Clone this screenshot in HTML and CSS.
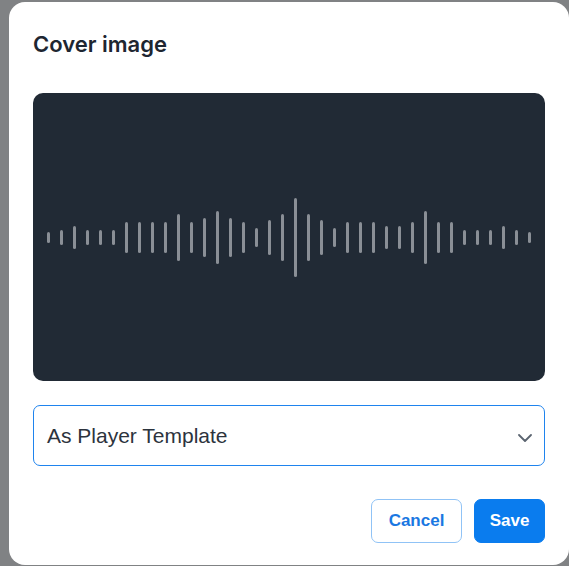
FILE: index.html
```html
<!DOCTYPE html>
<html>
<head>
<meta charset="utf-8">
<link rel="stylesheet" href="styles.css">
</head>
<body>
<div class="dialog">
  <h2 class="title">Cover image</h2>
  <div class="cover">
    <div class="wave">
      <span style="height:11px"></span><span style="height:15px"></span><span style="height:23px"></span><span style="height:15px"></span><span style="height:15px"></span><span style="height:15px"></span><span style="height:31px"></span><span style="height:31px"></span><span style="height:31px"></span><span style="height:31px"></span><span style="height:47px"></span><span style="height:31px"></span><span style="height:39px"></span><span style="height:53px"></span><span style="height:39px"></span><span style="height:31px"></span><span style="height:19px"></span><span style="height:35px"></span><span style="height:47px"></span><span style="height:79px"></span><span style="height:47px"></span><span style="height:35px"></span><span style="height:19px"></span><span style="height:31px"></span><span style="height:31px"></span><span style="height:31px"></span><span style="height:23px"></span><span style="height:23px"></span><span style="height:31px"></span><span style="height:53px"></span><span style="height:31px"></span><span style="height:31px"></span><span style="height:15px"></span><span style="height:15px"></span><span style="height:15px"></span><span style="height:23px"></span><span style="height:15px"></span><span style="height:11px"></span>
    </div>
  </div>
  <div class="select">
    <span class="select-text">As Player Template</span>
    <svg class="chev" width="14" height="8" viewBox="0 0 14 8"><polyline points="1,1 7,7 13,1" fill="none" stroke="#5b6470" stroke-width="1.8" stroke-linecap="round" stroke-linejoin="round"/></svg>
  </div>
  <div class="actions">
    <button class="btn btn-cancel">Cancel</button>
    <button class="btn btn-save">Save</button>
  </div>
</div>
</body>
</html>
```
FILE: styles.css
```css
html, body {
  margin: 0;
  padding: 0;
  height: 100%;
}
body {
  background: #808284;
  overflow: hidden;
  font-family: "Liberation Sans", Arial, sans-serif;
}
.dialog {
  box-sizing: border-box;
  margin: 2px 0 0 9px;
  width: 560px;
  height: 563px;
  background: #ffffff;
  border-radius: 16px;
  padding: 27px 24px 22px 24px;
  display: flex;
  flex-direction: column;
}
.title {
  margin: 0;
  font-family: Inter, "Liberation Sans", sans-serif;
  font-size: 22px;
  line-height: 30px;
  font-weight: 600;
  color: #1e2631;
}
.cover {
  margin-top: 34px;
  height: 288px;
  background: #212a35;
  border-radius: 10px;
  display: flex;
  align-items: center;
  justify-content: center;
}
.wave {
  display: flex;
  align-items: center;
  gap: 10px;
}
.wave span {
  display: block;
  width: 3px;
  border-radius: 2px;
  background: #8a8f96;
}
.select {
  box-sizing: border-box;
  margin-top: 24px;
  height: 61px;
  border: 1px solid #1f84ee;
  border-radius: 7px;
  display: flex;
  align-items: center;
  justify-content: space-between;
  padding: 0 12px 0 13px;
}
.select-text {
  font-size: 21px;
  color: #2c333d;
}
.chev {
  margin-top: 4px;
}
.actions {
  margin-top: auto;
  display: flex;
  justify-content: flex-end;
  gap: 12px;
}
.btn {
  box-sizing: border-box;
  height: 44px;
  border-radius: 7px;
  font-family: "Liberation Sans", Arial, sans-serif;
  font-size: 17px;
  font-weight: 700;
  padding: 0;
  cursor: pointer;
}
.btn-cancel {
  background: #ffffff;
  color: #1a78e2;
  border: 1px solid #90c3f6;
  width: 91px;
}
.btn-save {
  background: #0a7cee;
  color: #ffffff;
  border: 1px solid #0a7cee;
  width: 71px;
}
```
